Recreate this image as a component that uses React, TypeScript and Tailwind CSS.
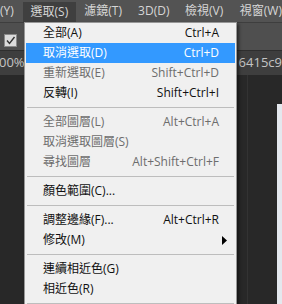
import React from "react";

type Item =
  | { sep: true }
  | { sep?: false; label: string; sc?: string; dis?: boolean; hi?: boolean; sub?: boolean };

const items: Item[] = [
  { label: "全部(A)", sc: "Ctrl+A" },
  { label: "取消選取(D)", sc: "Ctrl+D", hi: true },
  { label: "重新選取(E)", sc: "Shift+Ctrl+D", dis: true },
  { label: "反轉(I)", sc: "Shift+Ctrl+I" },
  { sep: true },
  { label: "全部圖層(L)", sc: "Alt+Ctrl+A", dis: true },
  { label: "取消選取圖層(S)", dis: true },
  { label: "尋找圖層", sc: "Alt+Shift+Ctrl+F", dis: true },
  { sep: true },
  { label: "顏色範圍(C)..." },
  { sep: true },
  { label: "調整邊緣(F)...", sc: "Alt+Ctrl+R" },
  { label: "修改(M)", sub: true },
  { sep: true },
  { label: "連續相近色(G)" },
  { label: "相近色(R)" },
  { sep: true },
];

const font = { fontFamily: '"Open Sans", "Noto Sans CJK TC", sans-serif' };

export default function App() {
  return (
    <div className="relative w-[282px] h-[304px] overflow-hidden bg-[#282828] text-[12px]" style={font}>
      {/* menu bar */}
      <div className="h-[22px] bg-[#535353] flex items-center text-[#d6d6d6] whitespace-nowrap">
        <div className="w-[23px]">(Y)</div>
        <div className="h-[20px] mt-[1px] w-[55px] bg-[#3f3f3f] flex items-center justify-center">選取(S)</div>
        <div className="ml-[8px] w-[55px]">濾鏡(T)</div>
        <div className="w-[48px]">3D(D)</div>
        <div className="w-[56px]">檢視(V)</div>
        <div>視窗(W)</div>
      </div>
      {/* options bar */}
      <div className="h-[28px] bg-[#4f4f4f] border-t border-[#3e3e3e] flex items-start">
        <div className="ml-[4px] mt-[11px] w-[13px] h-[13px] bg-[#dcdcdc] border border-[#8a8a8a] flex items-center justify-center">
          <svg width="11" height="11" viewBox="0 0 11 11">
            <path d="M2 5.5 L4.5 8.5 L9.5 2" stroke="#333" strokeWidth="1.4" fill="none" />
          </svg>
        </div>
      </div>
      {/* tab row */}
      <div className="h-[25px] bg-[#3e3e3e] border-t border-[#2e2e2e] flex items-center text-[#c4c4c4] text-[13px] whitespace-nowrap">
        <span className="-ml-[1px] w-[242px]">00%</span>
        <span>6415c9</span>
      </div>
      {/* workspace */}
      <div className="flex h-[229px]">
        <div className="flex-1" />
        <div className="w-[1px] bg-[#333] mr-[29px] h-full" />
        <div className="w-[5px] mt-[29px] bg-[#e4e8ee]" />
      </div>

      {/* dropdown menu */}
      <div className="absolute left-[24px] top-[22px] w-[213px] bg-[#f0f0f0] border border-[#979797] px-[1px] shadow-[2px_2px_3px_rgba(0,0,0,0.5)]">
        {items.map((it, i) =>
          it.sep ? (
            <div key={i} className="h-[9px] flex items-center px-[1px]">
              <div className="w-full h-[1px] bg-[#bdbdbd]" />
            </div>
          ) : (
            <div
              key={i}
              className={`h-[20px] flex items-center justify-between pl-[17px] pr-[16px] ${
                it.hi ? "bg-[#3399ff] text-white" : it.dis ? "text-[#6d6d6d]" : "text-[#111]"
              }`}
            >
              <span>{it.label}</span>
              {it.sc && <span>{it.sc}</span>}
              {it.sub && (
                <svg width="5" height="9" viewBox="0 0 5 9" className="mr-[-8px]">
                  <path d="M0 0 L5 4.5 L0 9 Z" fill="#000" />
                </svg>
              )}
            </div>
          )
        )}
      </div>
    </div>
  );
}
